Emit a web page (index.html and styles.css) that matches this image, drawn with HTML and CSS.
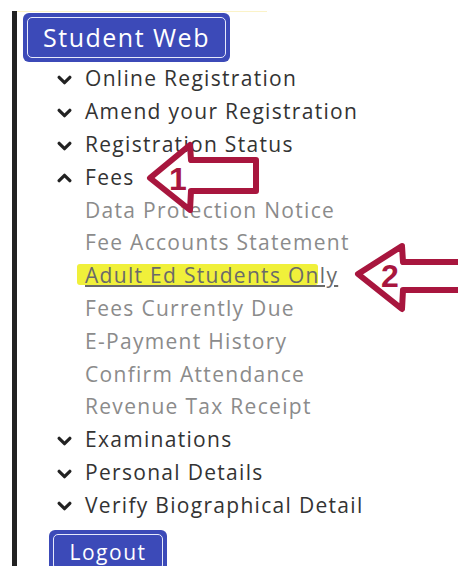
FILE: index.html
```html
<!DOCTYPE html>
<html lang="en">
<head>
<meta charset="utf-8">
<title>Student Web</title>
<link rel="stylesheet" href="styles.css">
</head>
<body>
<div class="page">
  <div class="topline"></div>
  <nav class="frame">
    <a class="btn btn-title" href="#">Student Web</a>
    <ul class="menu">
      <li class="item"><svg class="chev" viewBox="0 0 14 9"><polyline points="2,2 7,7 12,2"/></svg>Online Registration</li>
      <li class="item"><svg class="chev" viewBox="0 0 14 9"><polyline points="2,2 7,7 12,2"/></svg>Amend your Registration</li>
      <li class="item"><svg class="chev" viewBox="0 0 14 9"><polyline points="2,2 7,7 12,2"/></svg>Registration Status</li>
      <li class="item"><svg class="chev" viewBox="0 0 14 9"><polyline points="2,7 7,2 12,7"/></svg>Fees</li>
      <li class="sub">Data Protection Notice</li>
      <li class="sub">Fee Accounts Statement</li>
      <li class="sub sub-marked"><span class="highlight"></span><a class="link" href="#">Adult Ed Students Only</a></li>
      <li class="sub">Fees Currently Due</li>
      <li class="sub">E-Payment History</li>
      <li class="sub">Confirm Attendance</li>
      <li class="sub">Revenue Tax Receipt</li>
      <li class="item"><svg class="chev" viewBox="0 0 14 9"><polyline points="2,2 7,7 12,2"/></svg>Examinations</li>
      <li class="item"><svg class="chev" viewBox="0 0 14 9"><polyline points="2,2 7,7 12,2"/></svg>Personal Details</li>
      <li class="item"><svg class="chev" viewBox="0 0 14 9"><polyline points="2,2 7,7 12,2"/></svg>Verify Biographical Detail</li>
    </ul>
    <a class="btn btn-logout" href="#">Logout</a>
  </nav>

  <!-- callout arrows drawn over the menu -->
  <svg class="marks" viewBox="0 0 458 566" width="458" height="566">
    <path class="arrow" d="M150,178 L190,145 L191,160 L256,160 L256,191 L191,191 L190,210 Z"/>
    <text class="num" x="178" y="190">1</text>
    <path class="arrow" d="M470,262 L403,262 L402,246 L358,274 L402,309 L403,290 L470,290"/>
    <text class="num" x="390" y="287">2</text>
  </svg>
</div>
</body>
</html>
```
FILE: styles.css
```css
html, body {
  margin: 0;
  padding: 0;
  background: #ffffff;
}

.page {
  position: relative;
  width: 458px;
  height: 566px;
  overflow: hidden;
  font-family: "Open Sans", "Noto Sans", sans-serif;
}

.topline {
  position: absolute;
  left: 17px;
  top: 11px;
  width: 250px;
  height: 1px;
  background: #fbf3c8;
}

.frame {
  margin: 11px 0 0 12px;
  border-left: 5px solid #222222;
  height: 555px;
  box-sizing: border-box;
  padding-top: 2px;
}

.btn {
  display: flex;
  align-items: center;
  justify-content: center;
  position: relative;
  background: #3c4ab8;
  color: #ffffff;
  text-decoration: none;
  border-radius: 6px;
  box-sizing: border-box;
}

.btn::after {
  content: "";
  position: absolute;
  inset: 4px;
  border: 1.5px solid #e6e9fb;
  border-radius: 5px;
}

.btn-title {
  width: 207px;
  height: 49px;
  margin-left: 6px;
  font-size: 25px;
  letter-spacing: 1.5px;
  padding-bottom: 2px;
}

.btn-logout {
  width: 118px;
  height: 44px;
  margin: 9px 0 0 32px;
  font-size: 21px;
  letter-spacing: 1.5px;
  align-items: flex-start;
  padding-top: 8px;
}

.menu {
  list-style: none;
  margin: 0;
  padding: 0;
}

.menu li {
  height: 32.8px;
  display: flex;
  align-items: center;
  font-size: 21px;
  letter-spacing: 1.3px;
  white-space: nowrap;
  padding-left: 68px;
  position: relative;
}

.item {
  color: #333333;
}

.chev {
  position: absolute;
  left: 40px;
  top: 13px;
  width: 15px;
  height: 10px;
  fill: none;
  stroke: #222222;
  stroke-width: 3;
  stroke-linecap: round;
  stroke-linejoin: round;
}

.sub {
  color: #8b8b8b;
}

.link {
  color: #6a6a6a;
  text-decoration: underline;
  text-decoration-thickness: 1.5px;
  text-underline-offset: 2px;
  position: relative;
}

.highlight {
  position: absolute;
  left: 60px;
  top: 5px;
  width: 241px;
  height: 21px;
  background: #f0f03a;
  border-radius: 3px;
}

.marks {
  position: absolute;
  left: 0;
  top: 0;
  pointer-events: none;
}

.arrow {
  fill: none;
  stroke: #a8163e;
  stroke-width: 6;
  stroke-linejoin: round;
}

.num {
  fill: #a8163e;
  font-family: "Liberation Sans", sans-serif;
  font-weight: bold;
  font-size: 32px;
  text-anchor: middle;
}
```
